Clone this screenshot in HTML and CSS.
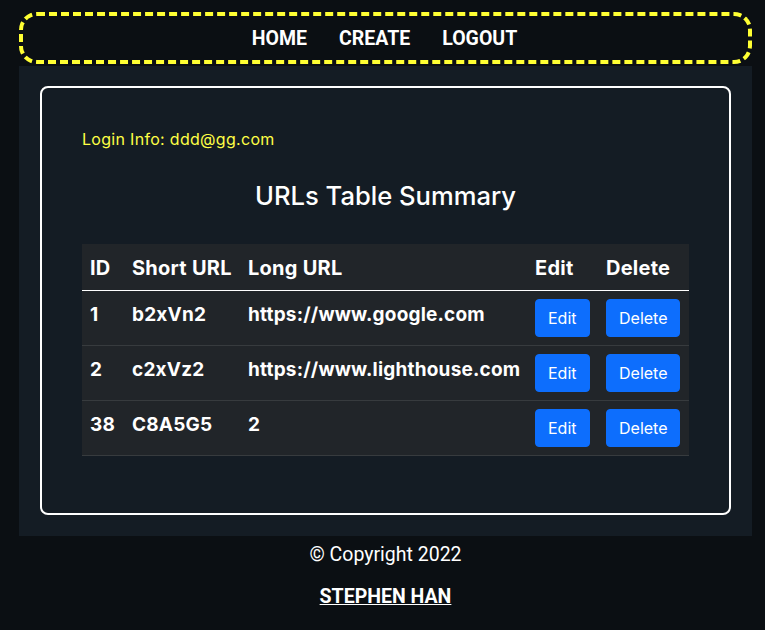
FILE: index.html
```html
<!DOCTYPE html>
<html>
<head>
<meta charset="utf-8">
<link rel="stylesheet" href="styles.css">
</head>
<body>
<nav class="nav">
  <a class="nav-link" href="#">HOME</a>
  <a class="nav-link" href="#">CREATE</a>
  <a class="nav-link" href="#">LOGOUT</a>
</nav>
<main class="main">
  <section class="card">
    <p class="login">Login Info: ddd@gg.com</p>
    <h2 class="title">URLs Table Summary</h2>
    <table class="urls">
      <colgroup>
        <col class="c-id"><col class="c-short"><col class="c-long"><col class="c-edit"><col class="c-del">
      </colgroup>
      <thead>
        <tr><th>ID</th><th>Short URL</th><th>Long URL</th><th>Edit</th><th>Delete</th></tr>
      </thead>
      <tbody>
        <tr><td>1</td><td>b2xVn2</td><td>https://www.google.com</td><td><button class="btn">Edit</button></td><td><button class="btn">Delete</button></td></tr>
        <tr><td>2</td><td>c2xVz2</td><td>https://www.lighthouse.com</td><td><button class="btn">Edit</button></td><td><button class="btn">Delete</button></td></tr>
        <tr><td>38</td><td>C8A5G5</td><td>2</td><td><button class="btn">Edit</button></td><td><button class="btn">Delete</button></td></tr>
      </tbody>
    </table>
  </section>
</main>
<footer class="footer">
  <p class="copy">© Copyright 2022</p>
  <a class="author" href="#">STEPHEN HAN</a>
</footer>
</body>
</html>
```
FILE: styles.css
```css
* { box-sizing: border-box; }
html, body { margin: 0; padding: 0; }
body {
  background: #0b0f13;
  color: #fff;
  font-family: Inter, "Liberation Sans", sans-serif;
  width: 765px;
  min-height: 630px;
}
.nav {
  margin: 12px 13px 0 19px;
  height: 52px;
  border: 4px dashed #ffff33;
  border-radius: 18px;
  display: flex;
  justify-content: center;
  align-items: center;
  gap: 32px;
  padding-right: 2px;
}
.nav-link {
  font-family: Roboto, "Liberation Sans", sans-serif;
  font-weight: 700;
  font-size: 19.5px;
  color: #fff;
  text-decoration: none;
}
.main {
  margin: 2px 13px 0 19px;
  background: #141c24;
  padding: 20px 21px 21px 21px;
}
.card {
  border: 2.5px solid #fff;
  border-radius: 8px;
  padding: 40px 40px 57px 40px;
}
.login {
  margin: 0;
  color: #ffff44;
  font-size: 16px;
  letter-spacing: 0.3px;
  line-height: 22px;
}
.title {
  margin: 28px 0 0 0;
  text-align: center;
  font-weight: 500;
  font-size: 25.6px;
  line-height: 36px;
}
.urls {
  margin-top: 30px;
  width: 100%;
  border-collapse: collapse;
  background: #212529;
  table-layout: fixed;
}
.c-id { width: 42px; }
.c-short { width: 116px; }
.c-long { width: 287px; }
.c-edit { width: 71px; }
.c-del { width: 91px; }
.urls th {
  text-align: left;
  font-weight: 700;
  font-size: 20px;
  letter-spacing: 0.25px;
  line-height: 28px;
  padding: 10px 8px 8px 8px;
  border-bottom: 1.5px solid #fff;
}
.urls td {
  font-weight: 700;
  font-size: 19px;
  letter-spacing: 0.2px;
  line-height: 27px;
  padding: 10px 8px 8px 8px;
  vertical-align: top;
  border-bottom: 1px solid #373b3e;
  white-space: nowrap;
}
.urls td:nth-child(4), .urls td:nth-child(5) { padding-top: 8px; }
.btn {
  background: #0d6efd;
  border: 1px solid #0d6efd;
  border-radius: 4px;
  color: #fff;
  font-family: Inter, "Liberation Sans", sans-serif;
  font-size: 16px;
  line-height: 24px;
  padding: 6px 12px;
  height: 38px;
}
.footer {
  display: flex;
  flex-direction: column;
  align-items: center;
  padding-top: 7px;
  padding-left: 6px;
}
.copy {
  margin: 0;
  font-family: Roboto, "Liberation Sans", sans-serif;
  font-size: 19.5px;
  line-height: 24px;
}
.author {
  margin-top: 18px;
  font-family: Roboto, "Liberation Sans", sans-serif;
  font-weight: 700;
  font-size: 19.5px;
  line-height: 24px;
  color: #fff;
}
```
